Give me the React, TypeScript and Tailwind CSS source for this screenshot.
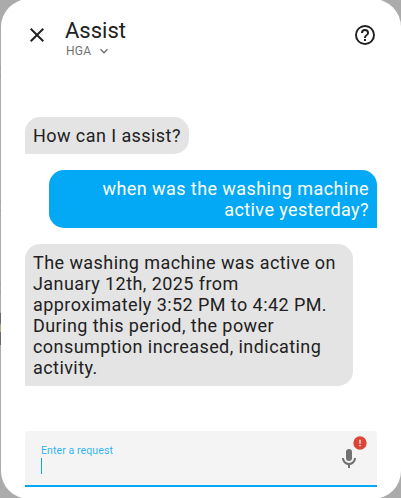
import type { ReactNode } from "react";

function Bubble({ mine = false, children }: { mine?: boolean; children: ReactNode }) {
  return (
    <div
      className={
        mine
          ? "ml-6 self-end rounded-[15px] rounded-br-none bg-[#03a9f4] p-2 text-right text-white"
          : "mr-6 self-start rounded-[15px] rounded-bl-none bg-[#e4e4e4] p-2 text-[#212121]"
      }
    >
      {children}
    </div>
  );
}

function Header() {
  return (
    <header className="flex h-[68px] items-start pl-6 pr-6">
      <svg className="mt-6 size-6 shrink-0" viewBox="0 0 24 24" fill="#212121">
        <path d="M19,6.41L17.59,5L12,10.59L6.41,5L5,6.41L10.59,12L5,17.59L6.41,19L12,13.41L17.59,19L19,17.59L13.41,12L19,6.41Z" />
      </svg>
      <div className="ml-4 mt-[18px] flex flex-1 flex-col">
        <h1 className="text-[22px] leading-7 text-[#212121]">Assist</h1>
        <div className="-mt-px ml-px flex h-[14px] items-center text-xs leading-[14px] text-[#727272]">
          <span className="tracking-[0.2px]">HGA</span>
          <svg className="ml-[5px] size-4" viewBox="0 0 24 24" fill="#727272">
            <path d="M7.41,8.58L12,13.17L16.59,8.58L18,10L12,16L6,10L7.41,8.58Z" />
          </svg>
        </div>
      </div>
      <svg className="mt-6 size-6 shrink-0" viewBox="0 0 24 24" fill="#212121">
        <path d="M11,18H13V16H11V18M12,2A10,10 0 0,0 2,12A10,10 0 0,0 12,22A10,10 0 0,0 22,12A10,10 0 0,0 12,2M12,20C7.59,20 4,16.41 4,12C4,7.59 7.59,4 12,4C16.41,4 20,7.59 20,12C20,16.41 16.41,20 12,20M12,6A4,4 0 0,0 8,10H10A2,2 0 0,1 12,8A2,2 0 0,1 14,10C14,12 11,11.75 11,15H13C13,12.75 16,12.5 16,10A4,4 0 0,0 12,6Z" />
      </svg>
    </header>
  );
}

function RequestField() {
  return (
    <div className="mx-6 mt-[45px] flex h-14 justify-between rounded-t border-b-2 border-[#03a9f4] bg-[#f4f4f4] pl-4 pr-4">
      <div className="pt-[13px]">
        <div className="text-[10.5px] leading-[14px] tracking-[0.1px] text-[#03a9f4]/85">Enter a request</div>
        <div className="h-4 w-px bg-[#03a9f4]" />
      </div>
      <div className="relative mt-4 size-6">
        <svg className="size-6" viewBox="0 0 24 24" fill="#727272">
          <path d="M12,2A3,3 0 0,1 15,5V11A3,3 0 0,1 12,14A3,3 0 0,1 9,11V5A3,3 0 0,1 12,2M19,11C19,14.53 16.39,17.44 13,17.93V21H11V17.93C7.61,17.44 5,14.53 5,11H7A5,5 0 0,0 12,16A5,5 0 0,0 17,11H19Z" />
        </svg>
        <svg className="absolute -top-3 left-[15px] size-4" viewBox="0 0 24 24" fill="#db4437">
          <path d="M13,13H11V7H13M13,17H11V15H13M12,2A10,10 0 0,0 2,12A10,10 0 0,0 12,22A10,10 0 0,0 22,12A10,10 0 0,0 12,2Z" />
        </svg>
      </div>
    </div>
  );
}

export default function App() {
  return (
    <div className="flex h-[498px] w-[401px] overflow-hidden bg-[#ababab] font-[Roboto,sans-serif]">
      <div className="flex w-px shrink-0 flex-col pt-[67px]">
        <div className="h-px bg-[#9a9a9a]" />
        <div className="mt-2 h-px bg-[#9a9a9a]" />
        <div className="mt-[124px] h-px bg-[#9a9a9a]" />
        <div className="mt-2 h-px bg-[#9a9a9a]" />
        <div className="mt-[72px] h-px bg-[#9a9a9a]" />
        <div className="mt-2 h-px bg-[#9a9a9a]" />
        <div className="mt-5 h-[10px] bg-[#686868]" />
        <div className="h-[2px] bg-[#858585]" />
        <div className="h-[7px] bg-[#b6a68a]" />
        <div className="h-[13px] bg-[#686868]" />
      </div>
      <main className="-mt-px flex h-[500px] w-[400px] shrink-0 flex-col rounded-[28px] bg-white">
        <Header />
        <div className="mx-6 mt-[50px] flex flex-col gap-4 text-lg leading-[21px] tracking-[0.43px]">
          <Bubble>How can I assist?</Bubble>
          <Bubble mine>when was the washing machine active yesterday?</Bubble>
          <Bubble>
            The washing machine was active on January 12th, 2025 from approximately 3:52 PM to 4:42 PM. During this
            period, the power consumption increased, indicating activity.
          </Bubble>
        </div>
        <RequestField />
      </main>
    </div>
  );
}
